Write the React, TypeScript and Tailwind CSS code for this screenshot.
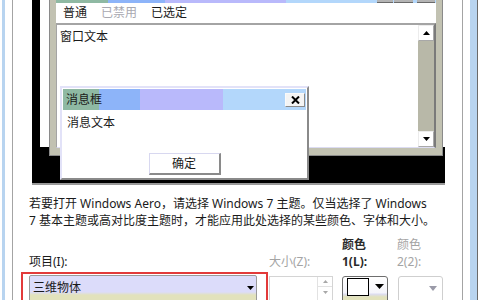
import React from "react";

function Tri({ up, color, w, h }: { up?: boolean; color: string; w: number; h: number }) {
  const pts = up ? `0,${h} ${w},${h} ${w / 2},0` : `0,0 ${w},0 ${w / 2},${h}`;
  return (
    <svg width={w} height={h} viewBox={`0 0 ${w} ${h}`} className="block">
      <polygon points={pts} fill={color} />
    </svg>
  );
}

function ScrollBtn({ up }: { up?: boolean }) {
  return (
    <div className="h-[16px] bg-white border border-[#ececec] border-r-[#a8a8a8] border-b-[#a8a8a8] flex items-center justify-center">
      <Tri up={up} color="#000" w={7} h={4} />
    </div>
  );
}

function Preview() {
  return (
    <div className="ml-[19px] w-[413px] h-[185px] bg-black border-b-2 border-[#9a9a9a] relative shrink-0">
      {/* inactive window */}
      <div className="absolute left-[8px] top-0 w-[405px] h-[147px] bg-white" />
      {/* active window */}
      <div className="absolute left-[17px] top-0 w-[394px] h-[156px] bg-[#c2c2b2] border-l border-r border-b border-[#8a8a8a] px-[6px] pb-[7px] flex flex-col">
        <div className="h-[3px] flex bg-[linear-gradient(to_right,#8fb9a3_0,#8fb9a3_52px,#8db4f9_52px,#8db4f9_109px,#b9b9fb_109px,#b9b9fb_230px,#b3d7fb_230px)]">
          <div className="ml-auto w-[16px] h-[3px] bg-[#b4b4b4] border-b border-[#6a6a6a]" />
          <div className="ml-[1px] w-[19px] h-[3px] bg-[#b4b4b4] border-b border-[#6a6a6a]" />
          <div className="ml-[4px] mr-[1px] w-[18px] h-[3px] bg-[#b4b4b4] border-b border-[#6a6a6a]" />
        </div>
        <div className="h-[20px] bg-white flex items-center">
          <span className="ml-[7px]">普通</span>
          <span className="ml-[14px] text-[#a8a8b0]">已禁用</span>
          <span className="ml-[14px]">已选定</span>
        </div>
        <div className="flex-1 flex bg-white border-t-2 border-l border-r-2 border-b border-t-[#a4a4a4] border-l-[#a4a4a4] border-r-[#7a7a7a] border-b-[#dcdcf2]">
          <div className="flex-1 pl-[3px] pt-[6px]">窗口文本</div>
          <div className="w-[16px] flex flex-col">
            <ScrollBtn up />
            <div className="flex-1 bg-[#b8b8a8]" />
            <ScrollBtn />
          </div>
        </div>
      </div>
      {/* message box */}
      <div className="absolute left-[28px] top-[86px] w-[249px] h-[94px] bg-white border-2 border-t-[#e2e2f8] border-l-[#e2e2f8] border-r-[#8a8a8a] border-b-[#8a8a8a] p-[1px] flex flex-col">
        <div className="h-[21px] flex items-center bg-[linear-gradient(to_right,#8fb9a3_0,#8fb9a3_36px,#8db4f9_36px,#8db4f9_77px,#b9b9fb_77px,#b9b9fb_160px,#b3d7fb_160px)]">
          <span className="ml-[3px]">消息框</span>
          <div className="ml-auto mr-[1px] w-[20px] h-[14px] bg-[#f4f4f4] border border-t-[#fafafa] border-l-[#fafafa] border-r-[#8a8a8a] border-b-[#8a8a8a] flex items-center justify-center">
            <svg width="9" height="8" viewBox="0 0 9 8" className="block">
              <path d="M1 0.5 L8 7.5 M8 0.5 L1 7.5" stroke="#000" strokeWidth="2" />
            </svg>
          </div>
        </div>
        <div className="ml-[4px] mt-[7px]">消息文本</div>
        <div className="mt-auto mb-[2px] self-center w-[72px] h-[22px] bg-white border border-t-[#d8d8f0] border-l-[#d8d8f0] border-r-2 border-b-2 border-r-[#8a8a8a] border-b-[#8a8a8a] flex items-center justify-center">
          确定
        </div>
      </div>
    </div>
  );
}

function Form() {
  return (
    <div className="mt-[7px] flex items-start">
      {/* item */}
      <div className="ml-[8px] w-[247px] flex flex-col shrink-0">
        <div className="h-[36px] pt-[20px] pl-[8px]">项目(I):</div>
        <div className="h-[40px] border-2 border-[#e23a3a] pt-[1px] pl-[6px] pr-[9px]">
          <div className="h-[30px] border border-[#9a9a9a] rounded-[2px] bg-[linear-gradient(to_bottom,#dcdcfa_0,#dcdcfa_16px,#e2e2bc_19px,#e2e2bc)] flex items-start">
            <span className="pl-[3px] pt-[6px]">三维物体</span>
            <div className="ml-auto mr-[2px] mt-[10px]">
              <Tri color="#000" w={7} h={4} />
            </div>
          </div>
        </div>
      </div>
      {/* size */}
      <div className="flex flex-col shrink-0">
        <div className="h-[40px] pt-[20px] pl-[1px] text-[#a4a4a4]">大小(Z):</div>
        <div className="ml-[1px] w-[64px] h-[30px] border border-[#d4d4d4] flex">
          <div className="flex-1 bg-white" />
          <div className="w-[15px] border-l border-[#e2e2e2] flex flex-col">
            <div className="h-[10px] flex items-center justify-center border-b border-[#e2e2e2]">
              <Tri up color="#a8a8a8" w={5} h={3} />
            </div>
            <div className="h-[10px] flex items-center justify-center">
              <Tri color="#a8a8a8" w={5} h={3} />
            </div>
          </div>
        </div>
      </div>
      {/* color 1 */}
      <div className="ml-[9px] w-[46px] flex flex-col shrink-0">
        <div className="h-[40px] pt-[3px] font-bold text-[#2a2a2a]">
          <div>颜色</div>
          <div className="mt-[5px]">1(L):</div>
        </div>
        <div className="h-[30px] border border-[#6e6e6e] rounded-[3px] bg-[linear-gradient(to_bottom,#ffffff_0,#f4f4fa_16px,#dcdcf4_17px,#e2e2bc_20px,#e2e2bc)] flex items-start pt-[1px] pl-[4px]">
          <div className="w-[22px] h-[18px] border border-black bg-white" />
          <div className="ml-[6px] mt-[6px]">
            <Tri color="#000" w={9} h={5} />
          </div>
        </div>
      </div>
      {/* color 2 */}
      <div className="ml-[9px] w-[46px] flex flex-col shrink-0">
        <div className="h-[40px] pt-[3px] text-[#a4a4a4]">
          <div>颜色</div>
          <div className="mt-[5px]">2(2):</div>
        </div>
        <div className="ml-[1px] w-[45px] h-[30px] border border-[#cfcfcf] rounded-[3px] bg-white flex items-start">
          <div className="ml-auto mr-[5px] mt-[9px]">
            <Tri color="#9a9aa8" w={8} h={5} />
          </div>
        </div>
      </div>
    </div>
  );
}

export default function App() {
  return (
    <div className="w-[480px] h-[300px] overflow-hidden bg-white flex font-['Noto_Sans','Noto_Sans_CJK_SC',sans-serif] text-[12px] leading-none text-[#1a1a1a]">
      <div className="w-[2px] bg-white shrink-0" />
      <div className="w-[3px] bg-[#b8d4f0] shrink-0" />
      <div className="w-[7px] bg-white shrink-0" />
      <div className="w-[1px] bg-[#a4a4a4] shrink-0" />
      <div className="w-[449px] flex flex-col shrink-0">
        <Preview />
        <p className="mt-[10px] ml-[16px] leading-[17px] whitespace-nowrap">
          若要打开 Windows Aero，请选择 Windows 7 主题。仅当选择了 Windows
          <br />7 基本主题或高对比度主题时，才能应用此处选择的某些颜色、字体和大小。
        </p>
        <Form />
      </div>
      <div className="w-[1px] bg-[#a4a4a4] shrink-0" />
      <div className="w-[7px] bg-white shrink-0" />
      <div className="w-[7px] bg-[#b8d4f0] shrink-0" />
      <div className="w-[1px] bg-[#6a6a6a] shrink-0" />
      <div className="w-[2px] bg-white shrink-0" />
    </div>
  );
}
